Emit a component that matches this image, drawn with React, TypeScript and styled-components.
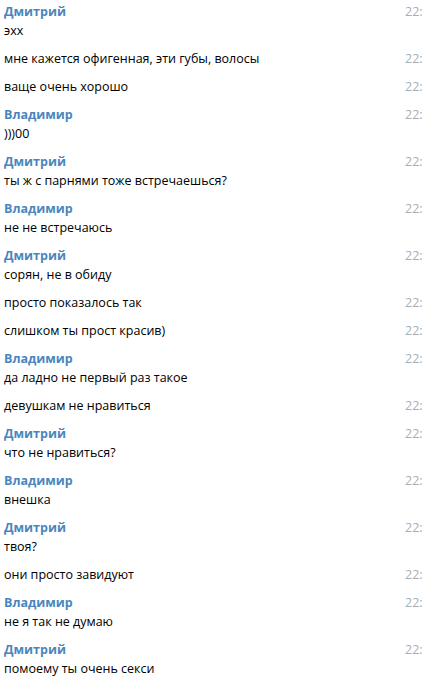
import styled, { createGlobalStyle } from "styled-components";

const GlobalStyle = createGlobalStyle`
  html, body {
    margin: 0;
    padding: 0;
    background: #ffffff;
  }
  body {
    font-family: "Open Sans", "Noto Sans", sans-serif;
    font-size: 12.5px;
    color: #000000;
    -webkit-font-smoothing: antialiased;
  }
`;

type Message = {
  author?: string;
  text: string;
};

const messages: Message[] = [
  { author: "Дмитрий", text: "эхх" },
  { text: "мне кажется офигенная, эти губы, волосы" },
  { text: "ваще очень хорошо" },
  { author: "Владимир", text: ")))00" },
  { author: "Дмитрий", text: "ты ж с парнями тоже встречаешься?" },
  { author: "Владимир", text: "не не встречаюсь" },
  { author: "Дмитрий", text: "сорян, не в обиду" },
  { text: "просто показалось так" },
  { text: "слишком ты прост красив)" },
  { author: "Владимир", text: "да ладно не первый раз такое" },
  { text: "девушкам не нравиться" },
  { author: "Дмитрий", text: "что не нравиться?" },
  { author: "Владимир", text: "внешка" },
  { author: "Дмитрий", text: "твоя?" },
  { text: "они просто завидуют" },
  { author: "Владимир", text: "не я так не думаю" },
  { author: "Дмитрий", text: "помоему ты очень секси" },
];

const History = styled.div`
  width: 425px;
  height: 687px;
  overflow: hidden;
  padding-top: 2px;
  box-sizing: border-box;
`;

const Row = styled.div`
  display: flex;
  align-items: flex-start;
  padding: 0 0 9px 4px;
`;

const Body = styled.div`
  flex: 1;
  min-width: 0;
`;

const Author = styled.div`
  font-weight: 700;
  color: #4a86bd;
  line-height: 19px;
`;

const Text = styled.div`
  line-height: 19px;
  white-space: nowrap;
`;

const Time = styled.div`
  width: 20px;
  margin-left: 12px;
  flex-shrink: 0;
  line-height: 19px;
  color: #a3aeb8;
  white-space: nowrap;
  overflow: hidden;
`;

export default function App() {
  return (
    <>
      <GlobalStyle />
      <History>
        {messages.map((m, i) => (
          <Row key={i}>
            <Body>
              {m.author && <Author>{m.author}</Author>}
              <Text>{m.text}</Text>
            </Body>
            <Time>22:</Time>
          </Row>
        ))}
      </History>
    </>
  );
}
